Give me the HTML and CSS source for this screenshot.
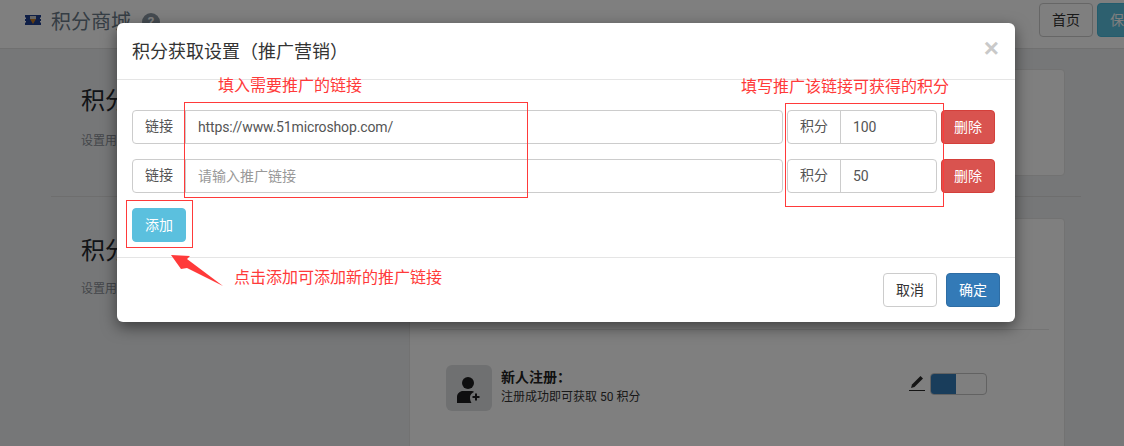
FILE: index.html
```html
<!DOCTYPE html>
<html lang="zh-CN">
<head>
<meta charset="utf-8">
<title>积分商城</title>
<link rel="stylesheet" href="styles.css">
</head>
<body>
<div class="page">
  <header class="topbar">
    <svg class="logo" width="16" height="10" viewBox="0 0 16 10"><path d="M0 0h16v2.500h-1v1.500h1v2h-1v1.500h1V10H0V7.500h1V6H0V4h1V2.500H0z" fill="#1f3f8f"/><rect x="5" y="1" width="6" height="3" fill="#c9c9c9"/><path d="M5 4h6L8 9z" fill="#c77a22"/></svg>
    <h1 class="page-title">积分商城</h1>
    <span class="help">?</span>
    <div class="top-actions">
      <button class="top-btn">首页</button>
      <button class="top-btn top-save">保存</button>
    </div>
  </header>
  <main class="content">
    <section class="section section-one">
      <div class="intro">
        <h2>积分规则</h2>
        <p>设置用户积分规则</p>
      </div>
      <div class="card card-one"></div>
    </section>
    <hr class="divider">
    <section class="section section-two">
      <div class="intro">
        <h2>积分获取</h2>
        <p>设置用户获取积分的方式</p>
      </div>
      <div class="card card-two">
        <div class="card-head"></div>
        <div class="rule">
          <div class="rule-icon">
            <svg width="24" height="30" viewBox="0 0 24 30"><circle cx="11" cy="10" r="6" fill="#1c1c1e"/><path d="M0 30v-6c0-3.500 3-6 6-6h8c1.500 0 2.500.4 3 1-2.500 1-4 3-4 5.500 0 2 .5 4 1.500 5.500z" fill="#1c1c1e"/><path d="M19 20.500v7M15.500 24h7" stroke="#1c1c1e" stroke-width="2"/></svg>
          </div>
          <div class="rule-text">
            <strong>新人注册：</strong>
            <span>注册成功即可获取 50 积分</span>
          </div>
          <svg class="pencil" width="16" height="16" viewBox="0 0 16 16"><path d="M11.500 1l2.500 2.500-8.500 8.500L2 13l1-3.500z" fill="#2b2b2b"/><path d="M0 15.500h16" stroke="#2b2b2b"/></svg>
          <div class="toggle"><span class="toggle-on"></span></div>
        </div>
      </div>
    </section>
  </main>

  <div class="backdrop"></div>

  <div class="modal">
    <div class="modal-header">
      <h3>积分获取设置（推广营销）</h3>
      <span class="close">×</span>
    </div>
    <div class="modal-body">
      <div class="row">
        <div class="group group-link">
          <span class="addon">链接</span>
          <input class="field" type="text" value="https://www.51microshop.com/">
        </div>
        <div class="group group-score">
          <span class="addon">积分</span>
          <input class="field" type="text" value="100">
        </div>
        <button class="btn btn-danger">删除</button>
      </div>
      <div class="row">
        <div class="group group-link">
          <span class="addon">链接</span>
          <input class="field" type="text" placeholder="请输入推广链接">
        </div>
        <div class="group group-score">
          <span class="addon">积分</span>
          <input class="field" type="text" value="50">
        </div>
        <button class="btn btn-danger">删除</button>
      </div>
      <div class="add-row"><button class="btn btn-info">添加</button></div>
    </div>
    <div class="modal-footer">
      <button class="btn btn-default">取消</button>
      <button class="btn btn-primary">确定</button>
    </div>
  </div>

  <span class="note note-link">填入需要推广的链接</span>
  <span class="note note-score">填写推广该链接可获得的积分</span>
  <span class="note note-add">点击添加可添加新的推广链接</span>
  <div class="mark mark-link"></div>
  <div class="mark mark-score"></div>
  <div class="mark mark-add"></div>
  <svg class="arrow" width="60" height="40" viewBox="0 0 60 40"><polygon points="1,2 20,3 17,6 53,33 17,15 11,16" fill="#ff3a3a"/></svg>
</div>
</body>
</html>
```
FILE: styles.css
```css
* { box-sizing: border-box; }
html, body { margin: 0; padding: 0; }
body {
  font-family: Roboto, "Noto Sans CJK SC", sans-serif;
  font-size: 14px;
  color: #333;
  background: #eceef0;
}
button, input { font-family: inherit; font-size: 14px; }
.page { position: relative; width: 1124px; height: 446px; overflow: hidden; }

.topbar {
  height: 49px;
  display: flex;
  align-items: flex-start;
  padding: 0 0 0 25px;
  background: #fff;
  border-bottom: 1px solid #e0e0e0;
}
.logo { margin: 15px 10px 0 0; flex: none; }
.page-title { margin: 8px 0 0; font-size: 20px; line-height: 28px; font-weight: 400; color: #6b7a88; }
.help {
  width: 18px; height: 18px; margin: 13px 0 0 11px; border-radius: 50%;
  background: #8a97a3; color: #fff; font-size: 13px; font-weight: 700; line-height: 18px; text-align: center;
}
.top-actions { margin: 0 -27px 0 auto; padding-top: 3px; display: flex; gap: 4px; }
.top-btn {
  width: 54px; height: 34px; padding: 0 0 2px; border: 1px solid #ccc; border-radius: 4px;
  background: #fff; color: #333;
}
.top-save { background: #5bc0de; border-color: #46b8da; color: #fff; }

.content { padding: 20px 43px 0 51px; }
.section { display: flex; padding-right: 16px; }
.intro { width: 358px; flex: none; padding-left: 30px; }
.intro h2 { margin: 19px 0 0; font-size: 24px; line-height: 26px; font-weight: 400; color: #25282e; }
.intro p { margin: 19px 0 0; font-size: 12px; line-height: 16px; color: #8a8f96; }
.card { flex: 1; background: #fff; border: 1px solid #e4e4e4; border-radius: 4px; }
.card-one { height: 107px; }
.divider { margin: 20px 0 21px; border: 0; border-top: 1px solid #dcdcdc; }
.section-two .intro h2 { margin-top: 20px; }
.section-two .intro p { margin-top: 17px; }
.card-two { height: 300px; }
.card-head { height: 111px; margin: 0 15px 0 20px; border-bottom: 1px solid #e8e8e8; }
.rule { display: flex; align-items: flex-start; padding: 35px 77px 0 36px; }
.rule-icon {
  width: 46px; height: 46px; flex: none; border-radius: 6px; background: #dfe0e2;
  display: flex; align-items: center; justify-content: center;
}
.rule-text { margin: 1px 0 0 9px; display: flex; flex-direction: column; }
.rule-text strong { font-size: 14px; line-height: 22px; color: #222; }
.rule-text span { font-size: 12px; line-height: 18px; color: #333; }
.pencil { margin: 10px 5px 0 auto; flex: none; }
.toggle {
  width: 57px; height: 22px; margin-top: 8px; flex: none;
  border: 1px solid #c4c4c4; border-radius: 4px; background: #fff;
}
.toggle-on { display: block; width: 25px; height: 100%; background: #337ab7; border-radius: 3px 0 0 3px; }

.backdrop { position: absolute; inset: 0; background: rgba(0,0,0,.5); }

.modal {
  position: absolute; left: 117px; top: 23px; width: 898px; height: 299px;
  display: flex; flex-direction: column;
  background: #fff; border-radius: 6px;
  box-shadow: 0 5px 15px rgba(0,0,0,.5);
}
.modal-header {
  height: 57px; display: flex; align-items: flex-start; justify-content: space-between;
  padding: 16px 16px 0 15px; border-bottom: 1px solid #e5e5e5;
}
.modal-header h3 { margin: 0; font-size: 18px; line-height: 26px; font-weight: 400; color: #333; }
.close { margin-top: -1px; font-size: 26px; line-height: 20px; font-weight: 700; color: #c9c9c9; font-family: "Liberation Sans", sans-serif; }
.modal-body { flex: 1; padding: 30px 20px 0 15px; display: flex; flex-direction: column; gap: 15px; }
.row { display: flex; gap: 4px; }
.group { display: flex; height: 34px; border: 1px solid #ccc; border-radius: 4px; background: #fff; }
.group-link { flex: 1; }
.group-score { width: 150px; flex: none; }
.addon {
  width: 53px; flex: none; text-align: center; font-size: 14px; line-height: 31px;
  color: #555; border-right: 1px solid #ccc;
}
.field {
  flex: 1; min-width: 0; height: 32px; padding: 0 12px; border: 0; outline: 0;
  background: transparent; color: #555; font-size: 14px; letter-spacing: -.14px;
}
.field::placeholder { color: #999; opacity: 1; letter-spacing: 0; }
.btn { width: 54px; height: 34px; padding: 0 0 2px; border-radius: 4px; border: 1px solid transparent; font-size: 14px; }
.btn-danger { background: #d9534f; border-color: #d43f3a; color: #fff; }
.btn-info { background: #5bc0de; border-color: #5bc0de; color: #fff; }
.btn-default { background: #fff; border-color: #ccc; color: #333; }
.btn-primary { background: #337ab7; border-color: #2e6da4; color: #fff; }
.add-row { display: flex; }
.modal-footer {
  height: 65px; display: flex; justify-content: flex-end; gap: 9px;
  padding: 15px 15px 0; border-top: 1px solid #e5e5e5;
}

.note { position: absolute; font-size: 16px; line-height: 22px; color: #ff3a3a; white-space: nowrap; font-family: "Noto Sans CJK SC", sans-serif; }
.note-link { left: 218px; top: 73px; }
.note-score { left: 741px; top: 74px; }
.note-add { left: 234px; top: 265px; }
.mark { position: absolute; border: 1px solid #ff3a3a; }
.mark-link { left: 184px; top: 102px; width: 344px; height: 96px; }
.mark-score { left: 785px; top: 103px; width: 159px; height: 104px; }
.mark-add { left: 126px; top: 200px; width: 67px; height: 48px; }
.arrow { position: absolute; left: 170px; top: 253px; }
```
